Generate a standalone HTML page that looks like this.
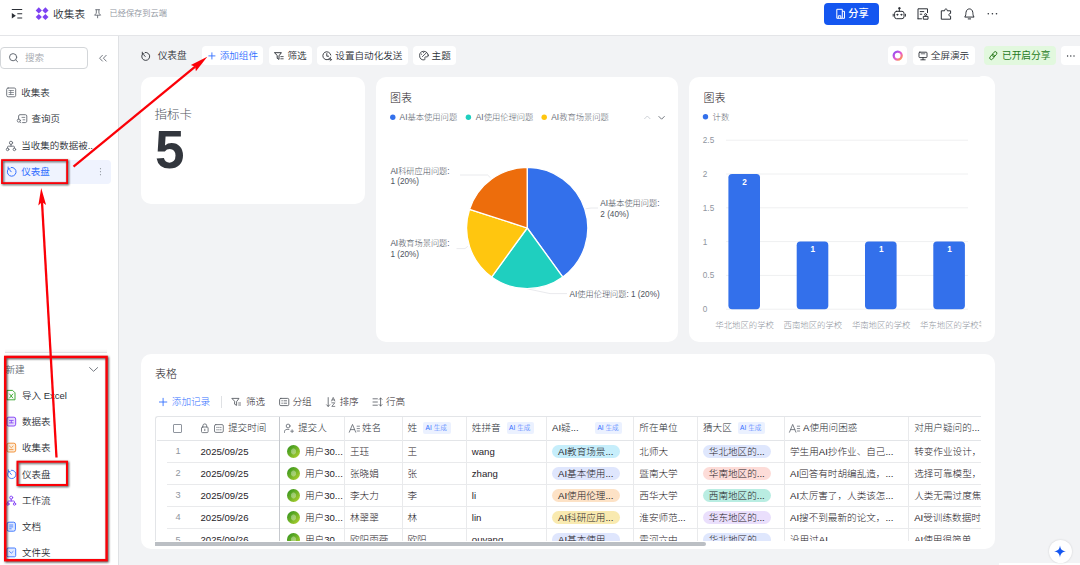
<!DOCTYPE html>
<html lang="zh-CN">
<head>
<meta charset="utf-8">
<title>收集表 - 仪表盘</title>
<style>
*{box-sizing:border-box;margin:0;padding:0}
html,body{width:1080px;height:565px;overflow:hidden}
body{position:relative;font-weight:300;background:#f2f3f5;font-family:"Liberation Sans","Noto Sans CJK SC",sans-serif;color:#1f2329;font-size:10px;-webkit-font-smoothing:antialiased}
.abs{position:absolute}
.t{position:absolute;white-space:nowrap;line-height:1;}
#topbar{position:absolute;left:0;top:0;width:1080px;height:36px;background:#fff;border-bottom:1px solid #e4e5e8}
#sidebar,#toolbar,#topbar{font-weight:350}
#sidebar{position:absolute;left:0;top:36px;width:119px;height:529px;background:#fff;border-right:1px solid #dfe1e4}
.card{position:absolute;background:#fff;border-radius:10px}
.btn{position:absolute;top:46.4px;height:19px;background:#fff;border-radius:4px}
svg{position:absolute;overflow:visible}
</style>
</head>
<body>
<!-- TOPBAR -->
<div id="topbar">
<svg style="left:0;top:0" width="200" height="36" viewBox="0 0 200 36">
 <g stroke="#2b2f36" stroke-width="1.1" fill="none">
  <path d="M11.8 9.5H22.2M17.3 13.8H22.2M17.3 18H22.2"/>
 </g>
 <path d="M11.8 13.1L15.9 15.8L11.8 18.5Z" fill="#2b2f36"/>
 <g fill="#7d42f2">
  <path d="M38.80 7.30L41.90 10.40L38.80 13.50L35.70 10.40Z"/>
  <path d="M38.80 13.90L41.90 17.00L38.80 20.10L35.70 17.00Z"/>
  <path d="M45.40 7.30L48.50 10.40L45.40 13.50L42.30 10.40Z"/>
  <path d="M45.40 13.90L48.50 17.00L45.40 20.10L42.30 17.00Z"/>
 </g>
 <g stroke="#646a73" stroke-width="0.9" fill="none" stroke-linejoin="round">
  <path d="M95.3 9.7H99.9M96.3 9.7V13.2L94.6 15.2H100.6L98.9 13.2V9.7M97.6 15.2V18.2"/>
 </g>
</svg>
<div class="t" style="left:53px;top:8.5px;font-size:10.7px;color:#2b2f36">收集表</div>
<div class="t" style="left:109.5px;top:10.2px;font-size:8.2px;color:#8f959e">已经保存到云端</div>
<div class="abs" style="left:824px;top:3px;width:55px;height:22px;border-radius:4px;background:#1456f0"></div>
<div class="t" style="left:848.3px;top:8.8px;font-size:10.2px;font-weight:500;color:#fff">分享</div>
<svg style="left:820px;top:0" width="200" height="36" viewBox="820 0 200 36">
 <g stroke="#fff" stroke-width="1" fill="none" stroke-linejoin="round">
  <path d="M836.8 9.3H842.3V18.3H836.8ZM842.3 11.3H844.5V18.3H842.3M838.3 18.3V15.8H840.8V18.3"/>
 </g>
 <g stroke="#2b2f36" stroke-width="1" fill="none" stroke-linejoin="round" stroke-linecap="round">
  <!-- robot -->
  <rect x="894.6" y="11.3" width="9.4" height="7.4" rx="2"/>
  <path d="M899.3 11.3V8.6M893.2 14.2V16.2M905.4 14.2V16.2"/>
  <circle cx="899.3" cy="8.2" r="0.7" fill="#2b2f36"/>
  <circle cx="897.3" cy="14.7" r="0.5" fill="#2b2f36"/><circle cx="901.3" cy="14.7" r="0.5" fill="#2b2f36"/>
  <!-- doc -->
  <path d="M918 18.8V8.8H927.5V12.6M918 18.8H921.5M920.2 11.6H923.8M920.2 14.2H921.8"/>
  <path d="M923.3 18.8V16.4H928V18.8Z"/><circle cx="925.6" cy="14.6" r="1"/>
  <!-- puzzle -->
  <path d="M941.3 18.8V10.8H944.6C944.3 8.4 947.6 8.4 947.3 10.8H950.6V13.4C948.3 13.2 948.3 16.4 950.6 16.2V18.8Z"/>
  <!-- bell -->
  <path d="M965 16.8C966 15.8 965.8 13.5 966 12.3C966.4 9.8 968 8.9 969.4 8.9C970.8 8.9 972.4 9.8 972.8 12.3C973 13.5 972.8 15.8 973.8 16.8ZM968.2 18.9H970.6"/>
 </g>
 <g fill="#2b2f36"><circle cx="988.3" cy="13.8" r="0.8"/><circle cx="992.4" cy="13.8" r="0.8"/><circle cx="996.5" cy="13.8" r="0.8"/></g>
</svg>
</div>
<!-- SIDEBAR -->
<div id="sidebar">
<!-- coordinates inside sidebar are page coords minus 36 in y -->
<div class="abs" style="left:0.3px;top:11px;width:87.6px;height:22px;border:1px solid #d3d6d9;border-radius:4px;background:#fff"></div>
<div class="t" style="left:25px;top:16.5px;font-size:9.6px;color:#a3a7ad">搜索</div>
<div class="abs" style="left:1px;top:123.7px;width:109.5px;height:24.6px;border-radius:4px;background:#eff3fe"></div>
<svg style="left:0;top:0" width="119" height="529" viewBox="0 36 119 529">
 <g stroke="#646a73" stroke-width="1" fill="none" stroke-linecap="round" stroke-linejoin="round">
  <circle cx="13.1" cy="57.2" r="3.6"/><path d="M15.8 60L17.6 61.8"/>
  <path d="M102.4 55.3L99.6 58.2L102.4 61.1M106.2 55.3L103.4 58.2L106.2 61.1" stroke-width="0.9"/>
  <!-- table icon -->
  <rect x="6.7" y="88" width="9" height="8.8" rx="1.4" stroke-width="0.9"/>
  <path d="M9 90.5H13.5M9 92.5H13.5M9 94.5H13.5M10.7 90.5V94.5" stroke-width="0.7"/>
  <!-- query icon -->
  <path d="M18.6 119.2V116C18.6 115.2 19.2 114.7 20 114.7H25.4C26.2 114.7 26.8 115.2 26.8 116V121.2C26.8 122 26.2 122.6 25.4 122.6H22.6" stroke-width="0.9"/>
  <path d="M22 117.4H24.8M23 119.8H24.8" stroke-width="0.8"/>
  <circle cx="18.8" cy="120.6" r="1.6" stroke-width="0.8"/><path d="M20 121.9L20.9 122.8" stroke-width="0.8"/>
  <!-- flow icon -->
  <circle cx="11" cy="142.8" r="1.6" stroke-width="0.9"/>
  <circle cx="7.6" cy="149.4" r="1.3" stroke-width="0.9"/><circle cx="14.4" cy="149.4" r="1.3" stroke-width="0.9"/>
  <path d="M11 144.4V146.2M7.6 148.1V146.9C7.6 146.5 7.9 146.2 8.3 146.2H13.7C14.1 146.2 14.4 146.5 14.4 146.9V148.1" stroke-width="0.9"/>
 </g>
 <!-- dashboard icon blue -->
 <g stroke="#3370ff" stroke-width="1" fill="none" stroke-linecap="round" stroke-linejoin="round">
  <path d="M8.6 168.6A4.4 4.4 0 1 0 11.2 167.4"/>
  <path d="M8.1 167V168.9H10"/>
  <path d="M11.2 171.8L9.7 170"/>
 </g>
 <g fill="#8f959e"><circle cx="100.5" cy="168.7" r="0.6"/><circle cx="100.5" cy="171.7" r="0.6"/><circle cx="100.5" cy="174.7" r="0.6"/></g>
</svg>
<div class="t" style="left:21.2px;top:51.6px;font-size:9.5px;color:#2b2f36">收集表</div>
<div class="t" style="left:31.5px;top:77.8px;font-size:9.5px;color:#2b2f36">查询页</div>
<div class="t" style="left:21.2px;top:105.1px;font-size:9.5px;color:#2b2f36">当收集的数据被..</div>
<div class="t" style="left:21.2px;top:130.9px;font-size:9.5px;font-weight:400;color:#3370ff">仪表盘</div>
<!-- new panel -->
<div class="abs" style="left:5px;top:312.5px;width:102px;height:3.5px;background:linear-gradient(rgba(31,35,41,0),rgba(31,35,41,.05))"></div>
<div class="abs" style="left:5px;top:316px;width:102px;height:1px;background:#e0e2e5"></div>
<div class="t" style="left:5.5px;top:329px;font-size:9.6px;color:#646a73">新建</div>
<div class="t" style="left:22px;top:355px;font-size:9.5px;color:#2b2f36">导入 Excel</div>
<div class="t" style="left:22px;top:381.1px;font-size:9.5px;color:#2b2f36">数据表</div>
<div class="t" style="left:22px;top:406.8px;font-size:9.5px;color:#2b2f36">收集表</div>
<div class="t" style="left:22px;top:433.6px;font-size:9.5px;color:#2b2f36">仪表盘</div>
<div class="t" style="left:22px;top:459.9px;font-size:9.5px;color:#2b2f36">工作流</div>
<div class="t" style="left:22px;top:485.8px;font-size:9.5px;color:#2b2f36">文档</div>
<div class="t" style="left:22px;top:511.5px;font-size:9.5px;color:#2b2f36">文件夹</div>
<svg style="left:0;top:0" width="119" height="529" viewBox="0 36 119 529">
 <path d="M89.3 367.3L93.6 371.3L97.9 367.3" stroke="#646a73" stroke-width="0.9" fill="none"/>
 <!-- excel -->
 <g stroke="#2ea121" stroke-width="0.9" fill="none" stroke-linejoin="round" stroke-linecap="round">
  <path d="M7.4 390.4H12.6L15 392.8V399.8H7.4Z"/><path d="M9.6 394L12.8 398M12.8 394L9.6 398"/>
 </g>
 <!-- data table purple -->
 <rect x="6.9" y="417.2" width="8.8" height="8.8" rx="1.8" fill="#e7dcfd" stroke="#7f3bf5" stroke-width="0.9"/>
 <path d="M9 420.4H13.6M9 422.9H13.6M11.3 420.4V422.9" stroke="#7f3bf5" stroke-width="0.8" fill="none"/>
 <!-- form orange -->
 <rect x="6.9" y="443.2" width="8.8" height="8.8" rx="1.8" fill="#fdecd9" stroke="#f08a2c" stroke-width="0.9"/>
 <path d="M9.2 445.8L11.3 447.8L13.4 445.8M9.2 449.6H13.4" stroke="#f08a2c" stroke-width="0.8" fill="none"/>
 <!-- dashboard blue -->
 <g stroke="#3370ff" stroke-width="0.9" fill="none" stroke-linecap="round" stroke-linejoin="round">
  <path d="M8.8 471.4A4.2 4.2 0 1 0 11.3 470.2"/><path d="M8.3 469.9V471.7H10.1"/><path d="M11.3 474.5L9.9 472.8"/>
 </g>
 <!-- workflow purple -->
 <g stroke="#7f3bf5" stroke-width="0.9" fill="none" stroke-linecap="round" stroke-linejoin="round">
  <circle cx="11.2" cy="497.6" r="1.5"/><circle cx="7.9" cy="504" r="1.2"/><circle cx="14.5" cy="504" r="1.2"/>
  <path d="M11.2 499.1V501M7.9 502.8V501.7C7.9 501.3 8.2 501 8.6 501H13.8C14.2 501 14.5 501.3 14.5 501.7V502.8"/>
 </g>
 <!-- doc blue -->
 <rect x="7.1" y="522.2" width="8.3" height="9" rx="1.8" fill="#e1eaff" stroke="#3370ff" stroke-width="0.9"/>
 <path d="M9.2 525H13.2M9.2 526.9H13.2M9.2 528.8H11.6" stroke="#3370ff" stroke-width="0.8" fill="none"/>
 <!-- folder blue -->
 <rect x="6.9" y="548" width="8.8" height="8.8" rx="1.2" fill="#e1eaff" stroke="#3370ff" stroke-width="0.9"/>
 <path d="M9.2 551.2L11.3 553.2L13.4 551.2" stroke="#3370ff" stroke-width="0.8" fill="none"/>
</svg>
</div>
<!-- TOOLBAR -->
<div id="toolbar">
<div class="btn" style="left:201.8px;width:61.4px"></div>
<div class="btn" style="left:269.2px;width:42.5px"></div>
<div class="btn" style="left:317.3px;width:90.4px"></div>
<div class="btn" style="left:413.4px;width:42.5px"></div>
<div class="btn" style="left:888px;width:19px;top:46px"></div>
<div class="btn" style="left:913px;width:61.5px;top:46px"></div>
<div class="btn" style="left:984px;width:72px;top:45.8px;height:18.8px;background:#e2f8de"></div>
<div class="btn" style="left:1061px;width:25px;top:46px"></div>
<div class="t" style="left:157.7px;top:51.3px;font-size:9.7px;color:#2b2f36">仪表盘</div>
<div class="t" style="left:219.7px;top:51.3px;font-size:9.6px;color:#3370ff">添加组件</div>
<div class="t" style="left:287.4px;top:51.3px;font-size:9.6px;color:#2b2f36">筛选</div>
<div class="t" style="left:335.3px;top:51.3px;font-size:9.6px;color:#2b2f36">设置自动化发送</div>
<div class="t" style="left:431.6px;top:51.3px;font-size:9.6px;color:#2b2f36">主题</div>
<div class="t" style="left:930.8px;top:50.8px;font-size:9.6px;color:#2b2f36">全屏演示</div>
<div class="t" style="left:1002px;top:50.8px;font-size:9.7px;font-weight:400;color:#257a1c">已开启分享</div>
<svg style="left:0;top:36px" width="1080" height="40" viewBox="0 36 1080 40">
 <defs><linearGradient id="rg" x1="0" y1="0" x2="1" y2="1"><stop offset="0" stop-color="#8a4cf5"/><stop offset="0.55" stop-color="#e85bd0"/><stop offset="1" stop-color="#ff9b3d"/></linearGradient></defs>
 <g stroke="#2b2f36" stroke-width="0.9" fill="none" stroke-linecap="round" stroke-linejoin="round">
  <path d="M142.8 53.6A4 4 0 1 0 145.2 52.4"/><path d="M142.3 52.2V53.9H144"/><path d="M145.2 56.5L143.8 54.9"/>
  <!-- filter -->
  <path d="M274.8 52.7H281.4L279 55.8V59.4L277.2 58.3V55.8Z" stroke-width="0.95"/><path d="M280.8 56.6H283.2M280.8 58.8H283.2" stroke-width="0.8"/>
  <!-- auto send clock -->
  <path d="M330.6 57.2A4 4 0 1 1 330.8 55"/><path d="M326.8 53.6V56.2H328.6"/><path d="M328.6 59.6H331.4M330.3 58.3L331.6 59.6L330.3 60.9" stroke-width="0.7"/>
  <!-- theme palette -->
  <path d="M428.2 55.2A4.3 4.3 0 1 0 424 59.9C425 59.9 425.2 59 424.8 58.4C424.4 57.6 425 56.9 425.9 56.9H427C427.8 56.9 428.2 56.3 428.2 55.2Z" stroke-width="0.85"/>
  <path d="M422.4 56.6L426.6 52.6" stroke-width="0.8"/><path d="M421.6 54.2H421.7M423.6 52.6H423.7" stroke-width="1"/>
  <!-- present -->
  <rect x="919" y="52.2" width="8" height="5.4" rx="0.8"/><path d="M923 57.6V59.6M920.8 59.8H925.2"/><path d="M921.2 53.8H924.8" stroke-width="0.7"/>
 </g>
 <g stroke="#3370ff" stroke-width="0.9" fill="none"><path d="M208.4 55.9H215.4M211.9 52.4V59.4"/></g>
 <g stroke="#2b7a1e" stroke-width="0.9" fill="none" transform="rotate(-50 993.3 55.6)"><rect x="988.6" y="54" width="5.6" height="3.2" rx="1.6"/><rect x="992.4" y="54" width="5.6" height="3.2" rx="1.6"/></g>
 <circle cx="897.7" cy="55.6" r="4" stroke="url(#rg)" stroke-width="2.3" fill="none"/>
 <g fill="#2b2f36"><circle cx="1067.6" cy="56" r="0.7"/><circle cx="1070.8" cy="56" r="0.7"/><circle cx="1074" cy="56" r="0.7"/></g>
</svg>
</div>
<!-- CARDS -->
<div class="card" id="c1" style="left:141px;top:77px;width:224px;height:126.6px">
<div class="t" style="left:13.5px;top:31.7px;font-size:12.5px;color:#50555c">指标卡</div>
<div class="t" style="left:14px;top:46px;font-size:53px;font-weight:bold;color:#32363d">5</div>
</div>
<div class="card" id="c2" style="left:376px;top:77px;width:302px;height:265px">
<svg style="left:0;top:0" width="302" height="265" viewBox="376 77 302 265" font-family="'Liberation Sans','Noto Sans CJK SC',sans-serif">
<text x="390" y="101.6" font-size="11" fill="#1f2329">图表</text>
<circle cx="392.8" cy="117.2" r="2.7" fill="#3370eb"/><text x="399.6" y="120.2" font-size="8.3" fill="#646a73">AI基本使用问题</text>
<circle cx="468.4" cy="117.2" r="2.7" fill="#1fcfbf"/><text x="475.8" y="120.2" font-size="8.3" fill="#646a73">AI使用伦理问题</text>
<circle cx="544.2" cy="117.2" r="2.7" fill="#ffc60f"/><text x="551.3" y="120.2" font-size="8.3" fill="#646a73">AI教育场景问题</text>
<path d="M644.3 119L647.3 116L650.3 119" stroke="#c9cdd2" stroke-width="0.9" fill="none"/>
<path d="M658.6 116.2L661.6 119.2L664.6 116.2" stroke="#646a73" stroke-width="0.9" fill="none"/>
<g stroke="#e3e5e8" stroke-width="0.8" fill="none">
<path d="M490.5 177.8L487.6 175H460"/>
<path d="M467.8 246.3L465 248.6H456.5"/>
<path d="M585.4 208.8L591 208H598"/>
<path d="M527.3 288.8L550 293.6H567"/>
</g>
<path d="M527.20 228.00L527.20 167.40A60.60 60.60 0 0 1 562.82 277.03Z" fill="#3370eb" stroke="#fff" stroke-width="1.3" stroke-linejoin="round"/>
<path d="M527.20 228.00L562.82 277.03A60.60 60.60 0 0 1 491.58 277.03Z" fill="#1fcfbf" stroke="#fff" stroke-width="1.3" stroke-linejoin="round"/>
<path d="M527.20 228.00L491.58 277.03A60.60 60.60 0 0 1 469.57 209.27Z" fill="#ffc60f" stroke="#fff" stroke-width="1.3" stroke-linejoin="round"/>
<path d="M527.20 228.00L469.57 209.27A60.60 60.60 0 0 1 527.20 167.40Z" fill="#ed6d0c" stroke="#fff" stroke-width="1.3" stroke-linejoin="round"/>
<g font-size="8.2" fill="#4e545d">
<text x="390.4" y="173.6">AI科研应用问题:</text><text x="390.4" y="183.6">1 (20%)</text>
<text x="390.4" y="246.4">AI教育场景问题:</text><text x="390.4" y="256.6">1 (20%)</text>
<text x="600.3" y="206.4">AI基本使用问题:</text><text x="600.3" y="217">2 (40%)</text>
<text x="569.6" y="296.8">AI使用伦理问题: 1 (20%)</text>
</g>
</svg>
</div>
<div class="card" id="c3" style="left:689px;top:77px;width:305.7px;height:265px;overflow:hidden">
<svg style="left:0;top:0" width="306" height="265" viewBox="689 77 306 265" font-family="'Liberation Sans','Noto Sans CJK SC',sans-serif">
<text x="703.4" y="101.6" font-size="11" fill="#1f2329">图表</text>
<circle cx="705.5" cy="116.8" r="2.7" fill="#3370eb"/><text x="712.6" y="119.9" font-size="8.4" fill="#646a73">计数</text>
<path d="M726 309.2H968" stroke="#eff0f1" stroke-width="1"/>
<path d="M726 275.4H968" stroke="#eff0f1" stroke-width="1"/>
<path d="M726 241.6H968" stroke="#eff0f1" stroke-width="1"/>
<path d="M726 207.8H968" stroke="#eff0f1" stroke-width="1"/>
<path d="M726 174.0H968" stroke="#eff0f1" stroke-width="1"/>
<path d="M726 140.2H968" stroke="#eff0f1" stroke-width="1"/>
<g font-size="8.2" fill="#8f959e">
<text x="702.8" y="312.1">0</text>
<text x="702.8" y="278.3">0.5</text>
<text x="702.8" y="244.5">1</text>
<text x="702.8" y="210.7">1.5</text>
<text x="702.8" y="176.9">2</text>
<text x="702.8" y="143.1">2.5</text>
</g>
<rect x="728.4" y="174.0" width="31.6" height="135.2" rx="3.6" fill="#3370eb"/>
<text x="744.6" y="184.7" font-size="8.2" font-weight="bold" fill="#fff" text-anchor="middle">2</text>
<rect x="796.7" y="241.6" width="31.6" height="67.6" rx="3.6" fill="#3370eb"/>
<text x="812.9" y="252.3" font-size="8.2" font-weight="bold" fill="#fff" text-anchor="middle">1</text>
<rect x="865.0" y="241.6" width="31.6" height="67.6" rx="3.6" fill="#3370eb"/>
<text x="881.2" y="252.3" font-size="8.2" font-weight="bold" fill="#fff" text-anchor="middle">1</text>
<rect x="933.3" y="241.6" width="31.6" height="67.6" rx="3.6" fill="#3370eb"/>
<text x="949.5" y="252.3" font-size="8.2" font-weight="bold" fill="#fff" text-anchor="middle">1</text>
<clipPath id="xc"><rect x="689" y="315" width="292.3" height="20"/></clipPath>
<g font-size="8.4" fill="#8f959e" clip-path="url(#xc)">
<text x="744.6" y="328.3" text-anchor="middle">华北地区的学校</text>
<text x="812.9" y="328.3" text-anchor="middle">西南地区的学校</text>
<text x="881.2" y="328.3" text-anchor="middle">华南地区的学校</text>
<text x="920.1" y="328.3">华东地区的学校等</text>
</g>
</svg>
</div>
<div class="card" id="c4" style="left:141px;top:354px;width:853.7px;height:195px">
<div class="t" style="left:14.0px;top:15.2px;font-size:11px;color:#1f2329;">表格</div>
<div class="t" style="left:30.8px;top:43.0px;font-size:9.6px;color:#3370ff;">添加记录</div>
<div class="t" style="left:105.0px;top:43.0px;font-size:9.6px;color:#1f2329;">筛选</div>
<div class="t" style="left:151.5px;top:43.0px;font-size:9.6px;color:#1f2329;">分组</div>
<div class="t" style="left:198.5px;top:43.0px;font-size:9.6px;color:#1f2329;">排序</div>
<div class="t" style="left:245.0px;top:43.0px;font-size:9.6px;color:#1f2329;">行高</div>
<div class="abs" style="left:80.0px;top:42.0px;width:1px;height:12px;background:#dfe1e4"></div>
<svg style="left:0;top:0" width="854" height="195" viewBox="141 354 854 195">
 <path d="M159 402H167.2M163.1 397.9V406.1" stroke="#3370ff" stroke-width="0.9" fill="none"/>
 <g stroke="#51565d" stroke-width="0.85" fill="none" stroke-linecap="round" stroke-linejoin="round">
  <path d="M232.2 398.4H239L236.6 401.6V405.4L234.6 404.2V401.6Z"/><path d="M238.6 403H240.6M238.6 405H240.6" stroke-width="0.75"/>
  <rect x="279.6" y="398.4" width="9.2" height="7.2" rx="1.2"/><path d="M281.8 400.8H282.4M281.8 403.2H282.4M284 400.8H286.6M284 403.2H286.6" stroke-width="0.8"/>
  <path d="M328.2 397.6V406.4M326.6 404.8L328.2 406.4L329.8 404.8" stroke-width="0.8"/>
  <path d="M331.6 401L333.2 397.4L334.8 401M332.1 399.9H334.3M331.8 402.8H334.8L331.8 406.4H334.8" stroke-width="0.7"/>
  <path d="M373 398.8H377.4M373 402H377.4M373 405.2H377.4" stroke-width="0.8"/><path d="M380.6 398V406M379.2 399.4L380.6 398L382 399.4M379.2 404.6L380.6 406L382 404.6" stroke-width="0.8"/>
 </g>
</svg>
<div class="abs" id="tbl" style="left:14px;top:61.5px;width:826px;height:125px;overflow:hidden;border-top:1px solid #e3e5e8;border-left:1px solid #e3e5e8;border-top-left-radius:3px">
<div class="abs" style="left:0.5px;top:0.5px;width:830px;height:130px">
<svg style="left:-1px;top:-1px" width="826" height="126" viewBox="155.5 416 826 126">
 <g stroke="#646a73" stroke-width="0.85" fill="none" stroke-linecap="round" stroke-linejoin="round">
  <rect x="201" y="427" width="6.6" height="5.6" rx="1"/><path d="M202.4 427V425.8A1.9 1.9 0 0 1 206.2 425.8V427"/><path d="M204.3 429.2V430.6" stroke-width="0.9"/>
  <rect x="214" y="424.6" width="8.8" height="7.8" rx="1.3"/><path d="M216.2 427.4H216.8M218.1 427.4H218.7M220 427.4H220.6M216.2 429.8H216.8M218.1 429.8H218.7M220 429.8H220.6" stroke-width="0.8"/>
  <circle cx="287.6" cy="426" r="1.9"/><path d="M284 432.4V431.6C284 430.2 285.2 429.4 286.6 429.4H288.4"/><path d="M290.2 431.2H293M291.6 429.8V432.6" stroke-width="0.8"/>
  <path d="M348.8 432.2L352 424.4L355.2 432.2M349.9 429.6H354.1"/><path d="M356.6 426.2H359M356.6 428.6H359M356.6 431H359" stroke-width="0.8"/>
  <path d="M789 432.2L792.2 424.4L795.4 432.2M790.1 429.6H794.3"/><path d="M796.8 426.2H799.2M796.8 428.6H799.2M796.8 431H799.2" stroke-width="0.8"/>
 </g>
</svg>
<div class="abs" style="left:0;top:22.5px;width:900px;height:1px;background:#e3e5e8"></div>
<div class="abs" style="left:10.5px;top:44.6px;width:900px;height:1px;background:#e9eaec"></div>
<div class="abs" style="left:10.5px;top:66.7px;width:900px;height:1px;background:#e9eaec"></div>
<div class="abs" style="left:10.5px;top:88.8px;width:900px;height:1px;background:#e9eaec"></div>
<div class="abs" style="left:10.5px;top:110.9px;width:900px;height:1px;background:#e9eaec"></div>
<div class="abs" style="left:10.5px;top:133.0px;width:900px;height:1px;background:#e9eaec"></div>
<div class="abs" style="left:122.2px;top:0;width:1px;height:140px;background:#c6c9ce"></div>
<div class="abs" style="left:187.6px;top:0;width:1px;height:140px;background:#e9eaec"></div>
<div class="abs" style="left:245.5px;top:0;width:1px;height:140px;background:#e9eaec"></div>
<div class="abs" style="left:309.3px;top:0;width:1px;height:140px;background:#e9eaec"></div>
<div class="abs" style="left:389.3px;top:0;width:1px;height:140px;background:#e9eaec"></div>
<div class="abs" style="left:476.2px;top:0;width:1px;height:140px;background:#e9eaec"></div>
<div class="abs" style="left:540.6px;top:0;width:1px;height:140px;background:#e9eaec"></div>
<div class="abs" style="left:627.3px;top:0;width:1px;height:140px;background:#e9eaec"></div>
<div class="abs" style="left:751.4px;top:0;width:1px;height:140px;background:#e9eaec"></div>
<div class="abs" style="left:16.8px;top:6.6px;width:9px;height:9px;border:1px solid #8f959e;border-radius:1px"></div>
<div class="t" style="left:71.5px;top:6.0px;font-size:9.6px;color:#2b2f36;">提交时间</div>
<div class="t" style="left:141.5px;top:6.0px;font-size:9.6px;color:#2b2f36;">提交人</div>
<div class="t" style="left:205.5px;top:6.0px;font-size:9.6px;color:#2b2f36;">姓名</div>
<div class="t" style="left:251.0px;top:6.0px;font-size:9.6px;color:#2b2f36;">姓</div>
<div class="t" style="left:315.3px;top:6.0px;font-size:9.6px;color:#2b2f36;">姓拼音</div>
<div class="t" style="left:395.5px;top:6.0px;font-size:9.6px;color:#2b2f36;">AI疑...</div>
<div class="t" style="left:482.8px;top:6.0px;font-size:9.6px;color:#2b2f36;">所在单位</div>
<div class="t" style="left:546.5px;top:6.0px;font-size:9.6px;color:#2b2f36;">猜大区</div>
<div class="t" style="left:646.5px;top:6.0px;font-size:9.6px;color:#2b2f36;">A使用问困惑</div>
<div class="t" style="left:757.7px;top:6.0px;font-size:9.6px;color:#2b2f36;">对用户疑问的...</div>
<div class="abs" style="left:266.5px;top:5.0px;width:27.5px;height:12px;border-radius:2px;background:#ebf1ff"></div>
<div class="t" style="left:269.1px;top:7.6px;font-size:6.6px;color:#3370ff;">AI 生成</div>
<div class="abs" style="left:350.0px;top:5.0px;width:27.5px;height:12px;border-radius:2px;background:#ebf1ff"></div>
<div class="t" style="left:352.6px;top:7.6px;font-size:6.6px;color:#3370ff;">AI 生成</div>
<div class="abs" style="left:438.3px;top:5.0px;width:27.5px;height:12px;border-radius:2px;background:#ebf1ff"></div>
<div class="t" style="left:440.9px;top:7.6px;font-size:6.6px;color:#3370ff;">AI 生成</div>
<div class="abs" style="left:581.0px;top:5.0px;width:27.5px;height:12px;border-radius:2px;background:#ebf1ff"></div>
<div class="t" style="left:583.6px;top:7.6px;font-size:6.6px;color:#3370ff;">AI 生成</div>
<div class="t" style="left:21.5px;top:30.1px;font-size:9.2px;color:#8f959e;transform:translateX(-50%);">1</div>
<div class="t" style="left:44.0px;top:29.8px;font-size:9.6px;color:#1f2329;">2025/09/25</div>
<div class="abs" style="left:130.8px;top:27.7px;width:13px;height:13px;border-radius:50%;background:radial-gradient(ellipse 2.8px 3.4px at 50% 50%,rgba(255,255,255,.38) 0,rgba(255,255,255,.32) 80%,rgba(255,255,255,0) 100%),linear-gradient(135deg,#3a961f 10%,#6fb226 50%,#b2d230 95%)"></div>
<div class="t" style="left:148.5px;top:29.8px;font-size:9.6px;color:#1f2329;">用户30...</div>
<div class="t" style="left:193.5px;top:29.8px;font-size:9.6px;color:#1f2329;">王珏</div>
<div class="t" style="left:251.0px;top:29.8px;font-size:9.6px;color:#1f2329;">王</div>
<div class="t" style="left:315.3px;top:29.8px;font-size:9.6px;color:#1f2329;">wang</div>
<div class="abs" style="left:395.5px;top:27.7px;width:68px;height:13px;border-radius:6.5px;background:#c6eefb"></div>
<div class="t" style="left:401.5px;top:29.8px;font-size:9.6px;color:#1f2329;">AI教育场景...</div>
<div class="t" style="left:482.8px;top:29.8px;font-size:9.6px;color:#1f2329;">北师大</div>
<div class="abs" style="left:546.5px;top:27.7px;width:67.8px;height:13px;border-radius:6.5px;background:#dfe7fd"></div>
<div class="t" style="left:552.3px;top:29.8px;font-size:9.6px;color:#1f2329;">华北地区的...</div>
<div class="t" style="left:633.5px;top:29.8px;font-size:9.6px;color:#1f2329;">学生用AI抄作业、自己...</div>
<div class="t" style="left:757.7px;top:29.8px;font-size:9.6px;color:#1f2329;">转变作业设计，</div>
<div class="t" style="left:21.5px;top:52.2px;font-size:9.2px;color:#8f959e;transform:translateX(-50%);">2</div>
<div class="t" style="left:44.0px;top:51.9px;font-size:9.6px;color:#1f2329;">2025/09/25</div>
<div class="abs" style="left:130.8px;top:49.8px;width:13px;height:13px;border-radius:50%;background:radial-gradient(ellipse 2.8px 3.4px at 50% 50%,rgba(255,255,255,.38) 0,rgba(255,255,255,.32) 80%,rgba(255,255,255,0) 100%),linear-gradient(135deg,#3a961f 10%,#6fb226 50%,#b2d230 95%)"></div>
<div class="t" style="left:148.5px;top:51.9px;font-size:9.6px;color:#1f2329;">用户30...</div>
<div class="t" style="left:193.5px;top:51.9px;font-size:9.6px;color:#1f2329;">张晓娟</div>
<div class="t" style="left:251.0px;top:51.9px;font-size:9.6px;color:#1f2329;">张</div>
<div class="t" style="left:315.3px;top:51.9px;font-size:9.6px;color:#1f2329;">zhang</div>
<div class="abs" style="left:395.5px;top:49.8px;width:68px;height:13px;border-radius:6.5px;background:#dfe6fd"></div>
<div class="t" style="left:401.5px;top:51.9px;font-size:9.6px;color:#1f2329;">AI基本使用...</div>
<div class="t" style="left:482.8px;top:51.9px;font-size:9.6px;color:#1f2329;">暨南大学</div>
<div class="abs" style="left:546.5px;top:49.8px;width:67.8px;height:13px;border-radius:6.5px;background:#fddcd8"></div>
<div class="t" style="left:552.3px;top:51.9px;font-size:9.6px;color:#1f2329;">华南地区的...</div>
<div class="t" style="left:633.5px;top:51.9px;font-size:9.6px;color:#1f2329;">AI回答有时胡编乱造，...</div>
<div class="t" style="left:757.7px;top:51.9px;font-size:9.6px;color:#1f2329;">选择可靠模型，</div>
<div class="t" style="left:21.5px;top:74.3px;font-size:9.2px;color:#8f959e;transform:translateX(-50%);">3</div>
<div class="t" style="left:44.0px;top:74.0px;font-size:9.6px;color:#1f2329;">2025/09/25</div>
<div class="abs" style="left:130.8px;top:71.9px;width:13px;height:13px;border-radius:50%;background:radial-gradient(ellipse 2.8px 3.4px at 50% 50%,rgba(255,255,255,.38) 0,rgba(255,255,255,.32) 80%,rgba(255,255,255,0) 100%),linear-gradient(135deg,#3a961f 10%,#6fb226 50%,#b2d230 95%)"></div>
<div class="t" style="left:148.5px;top:74.0px;font-size:9.6px;color:#1f2329;">用户30...</div>
<div class="t" style="left:193.5px;top:74.0px;font-size:9.6px;color:#1f2329;">李大力</div>
<div class="t" style="left:251.0px;top:74.0px;font-size:9.6px;color:#1f2329;">李</div>
<div class="t" style="left:315.3px;top:74.0px;font-size:9.6px;color:#1f2329;">li</div>
<div class="abs" style="left:395.5px;top:71.9px;width:68px;height:13px;border-radius:6.5px;background:#fde2c6"></div>
<div class="t" style="left:401.5px;top:74.0px;font-size:9.6px;color:#1f2329;">AI使用伦理...</div>
<div class="t" style="left:482.8px;top:74.0px;font-size:9.6px;color:#1f2329;">西华大学</div>
<div class="abs" style="left:546.5px;top:71.9px;width:67.8px;height:13px;border-radius:6.5px;background:#b9ede2"></div>
<div class="t" style="left:552.3px;top:74.0px;font-size:9.6px;color:#1f2329;">西南地区的...</div>
<div class="t" style="left:633.5px;top:74.0px;font-size:9.6px;color:#1f2329;">AI太厉害了，人类该怎...</div>
<div class="t" style="left:757.7px;top:74.0px;font-size:9.6px;color:#1f2329;">人类无需过度焦虑</div>
<div class="t" style="left:21.5px;top:96.4px;font-size:9.2px;color:#8f959e;transform:translateX(-50%);">4</div>
<div class="t" style="left:44.0px;top:96.1px;font-size:9.6px;color:#1f2329;">2025/09/26</div>
<div class="abs" style="left:130.8px;top:94.0px;width:13px;height:13px;border-radius:50%;background:radial-gradient(ellipse 2.8px 3.4px at 50% 50%,rgba(255,255,255,.38) 0,rgba(255,255,255,.32) 80%,rgba(255,255,255,0) 100%),linear-gradient(135deg,#3a961f 10%,#6fb226 50%,#b2d230 95%)"></div>
<div class="t" style="left:148.5px;top:96.1px;font-size:9.6px;color:#1f2329;">用户30...</div>
<div class="t" style="left:193.5px;top:96.1px;font-size:9.6px;color:#1f2329;">林翠翠</div>
<div class="t" style="left:251.0px;top:96.1px;font-size:9.6px;color:#1f2329;">林</div>
<div class="t" style="left:315.3px;top:96.1px;font-size:9.6px;color:#1f2329;">lin</div>
<div class="abs" style="left:395.5px;top:94.0px;width:68px;height:13px;border-radius:6.5px;background:#f9eab0"></div>
<div class="t" style="left:401.5px;top:96.1px;font-size:9.6px;color:#1f2329;">AI科研应用...</div>
<div class="t" style="left:482.8px;top:96.1px;font-size:9.6px;color:#1f2329;">淮安师范...</div>
<div class="abs" style="left:546.5px;top:94.0px;width:67.8px;height:13px;border-radius:6.5px;background:#eadffc"></div>
<div class="t" style="left:552.3px;top:96.1px;font-size:9.6px;color:#1f2329;">华东地区的...</div>
<div class="t" style="left:633.5px;top:96.1px;font-size:9.6px;color:#1f2329;">AI搜不到最新的论文，...</div>
<div class="t" style="left:757.7px;top:96.1px;font-size:9.6px;color:#1f2329;">AI受训练数据时效</div>
<div class="t" style="left:21.5px;top:118.5px;font-size:9.2px;color:#8f959e;transform:translateX(-50%);">5</div>
<div class="t" style="left:44.0px;top:118.2px;font-size:9.6px;color:#1f2329;">2025/09/26</div>
<div class="abs" style="left:130.8px;top:116.1px;width:13px;height:13px;border-radius:50%;background:radial-gradient(ellipse 2.8px 3.4px at 50% 50%,rgba(255,255,255,.38) 0,rgba(255,255,255,.32) 80%,rgba(255,255,255,0) 100%),linear-gradient(135deg,#3a961f 10%,#6fb226 50%,#b2d230 95%)"></div>
<div class="t" style="left:148.5px;top:118.2px;font-size:9.6px;color:#1f2329;">用户30...</div>
<div class="t" style="left:193.5px;top:118.2px;font-size:9.6px;color:#1f2329;">欧阳雨薇</div>
<div class="t" style="left:251.0px;top:118.2px;font-size:9.6px;color:#1f2329;">欧阳</div>
<div class="t" style="left:315.3px;top:118.2px;font-size:9.6px;color:#1f2329;">ouyang</div>
<div class="abs" style="left:395.5px;top:116.1px;width:68px;height:13px;border-radius:6.5px;background:#dfe6fd"></div>
<div class="t" style="left:401.5px;top:118.2px;font-size:9.6px;color:#1f2329;">AI基本使用...</div>
<div class="t" style="left:482.8px;top:118.2px;font-size:9.6px;color:#1f2329;">霍河六中</div>
<div class="abs" style="left:546.5px;top:116.1px;width:67.8px;height:13px;border-radius:6.5px;background:#dfe7fd"></div>
<div class="t" style="left:552.3px;top:118.2px;font-size:9.6px;color:#1f2329;">华北地区的...</div>
<div class="t" style="left:633.5px;top:118.2px;font-size:9.6px;color:#1f2329;">没用过AI</div>
<div class="t" style="left:757.7px;top:118.2px;font-size:9.6px;color:#1f2329;">AI使用很简单</div>
</div>
</div>
<div class="abs" style="left:14px;top:187.8px;width:551.0px;height:4.5px;background:#bbbfc4;border-radius:0 2px 2px 0"></div>
</div>
<div class="abs" style="left:979px;top:76px;width:16px;height:14px;background:#fff;border-radius:3px 10px 0 0"></div>
<!-- OVERLAYS -->
<div id="overlays">
<div class="abs" style="left:999px;top:563px;width:81px;height:2px;background:#fff"></div>
<div class="abs" style="left:1048.5px;top:540px;width:23px;height:23px;border-radius:50%;background:#fff;box-shadow:0 0 2px rgba(31,35,41,.18)"></div>
<svg style="left:0;top:0" width="1080" height="565" viewBox="0 0 1080 565">
 <path d="M1060 545.6C1060.5 549.4 1062.1 551 1065.9 551.5C1062.1 552 1060.5 553.6 1060 557.4C1059.5 553.6 1057.9 552 1054.1 551.5C1057.9 551 1059.5 549.4 1060 545.6Z" fill="#1456f0"/>
 <g style="filter:drop-shadow(1.5px 1.5px 1.1px rgba(0,0,0,.72))" fill="none" stroke="#fb0007">
  <rect x="2" y="160.1" width="65.1" height="23" stroke-width="1.8"/>
  <rect x="5.2" y="356.9" width="101.4" height="203.3" stroke-width="2.4"/>
  <rect x="17.5" y="461.7" width="49.5" height="23.3" stroke-width="2"/>
 </g>
 <path d="M73.5 166.6L195.2 66.7" stroke="#fb0007" stroke-width="2.3" fill="none"/><path d="M207.3 56.7L195.9 71.2L195.2 66.7L190.9 65.0Z" fill="#fb0007"/>
 <path d="M56.5 457.5L42.0 202.0" stroke="#fb0007" stroke-width="2.3" fill="none"/><path d="M41.2 188.0L46.1 205.1L42.0 202.0L38.3 205.5Z" fill="#fb0007"/>
</svg>
</div>
</body>
</html>
